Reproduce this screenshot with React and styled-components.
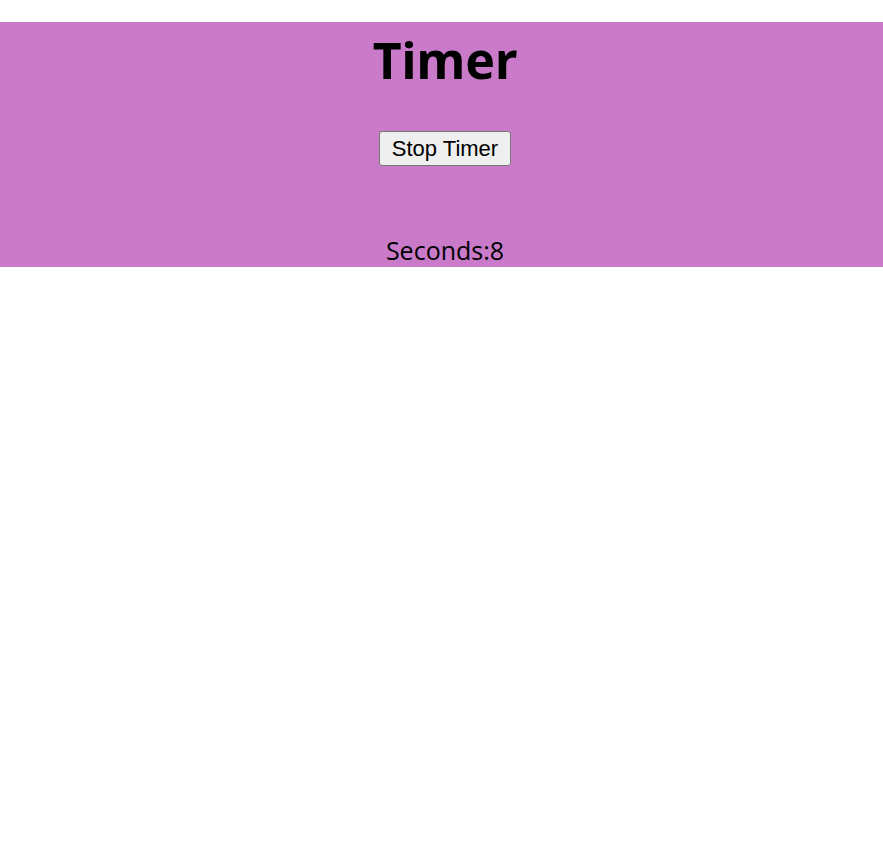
import React, { useState } from "react";
import styled, { createGlobalStyle } from "styled-components";

const GlobalStyle = createGlobalStyle`
  body {
    margin: 0;
    background: #ffffff;
    color: #000000;
    font-family: "Open Sans", "Noto Sans", sans-serif;
  }
`;

const Panel = styled.main`
  display: flex;
  flex-direction: column;
  align-items: center;
  margin-top: 22px;
  padding-left: 7px;
  background: #c97bca;
`;

const Title = styled.h1`
  margin: 0;
  font-family: "Noto Sans", sans-serif;
  font-size: 50px;
  line-height: 76px;
  font-weight: 700;
`;

const TimerButton = styled.button`
  margin: 33px 0 68px;
  height: 35px;
  padding: 0 12px;
  border: 1px solid #767676;
  border-radius: 3px;
  background: #efefef;
  color: #000000;
  font: 22px "Liberation Sans", sans-serif;
`;

const Seconds = styled.div`
  font-size: 25px;
  line-height: 33px;
`;

export default function App() {
  const [running, setRunning] = useState(true);

  return (
    <>
      <GlobalStyle />
      <Panel>
        <Title>Timer</Title>
        <TimerButton type="button" onClick={() => setRunning(!running)}>
          {running ? "Stop Timer" : "Start Timer"}
        </TimerButton>
        <Seconds>Seconds:8</Seconds>
      </Panel>
    </>
  );
}
